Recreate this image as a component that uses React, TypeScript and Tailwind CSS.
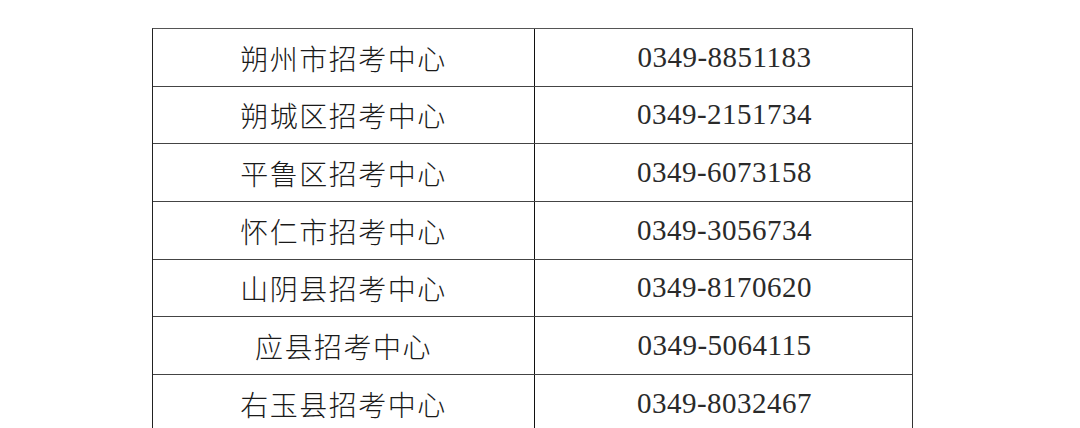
const rows = [
  ["朔州市招考中心", "0349-8851183"],
  ["朔城区招考中心", "0349-2151734"],
  ["平鲁区招考中心", "0349-6073158"],
  ["怀仁市招考中心", "0349-3056734"],
  ["山阴县招考中心", "0349-8170620"],
  ["应县招考中心", "0349-5064115"],
  ["右玉县招考中心", "0349-8032467"],
];

export default function App() {
  return (
    <div className="h-[428px] w-[1080px] overflow-hidden bg-white pt-[28px] pl-[152px]">
      <div className="w-[761px] border-t border-l-[1.5px] border-r-[1.5px] border-t-[#555] border-l-[#222] border-r-[#333]">
        {rows.map(([name, phone], i) => (
          <div key={i} className="flex h-[57.67px] border-b border-[#444]">
            <div className="flex w-[382px] items-center justify-center border-r-[1.5px] border-[#111] pt-px text-[28px] font-light tracking-[1.5px] text-[#1a1a1a] [font-family:'Noto_Sans_CJK_SC',sans-serif]">
              {name}
            </div>
            <div className="flex flex-1 items-center justify-center pl-[2px] text-[29px] tracking-[0.5px] text-[#2a2a2a] [font-family:'Liberation_Serif',serif]">
              {phone}
            </div>
          </div>
        ))}
      </div>
    </div>
  );
}
